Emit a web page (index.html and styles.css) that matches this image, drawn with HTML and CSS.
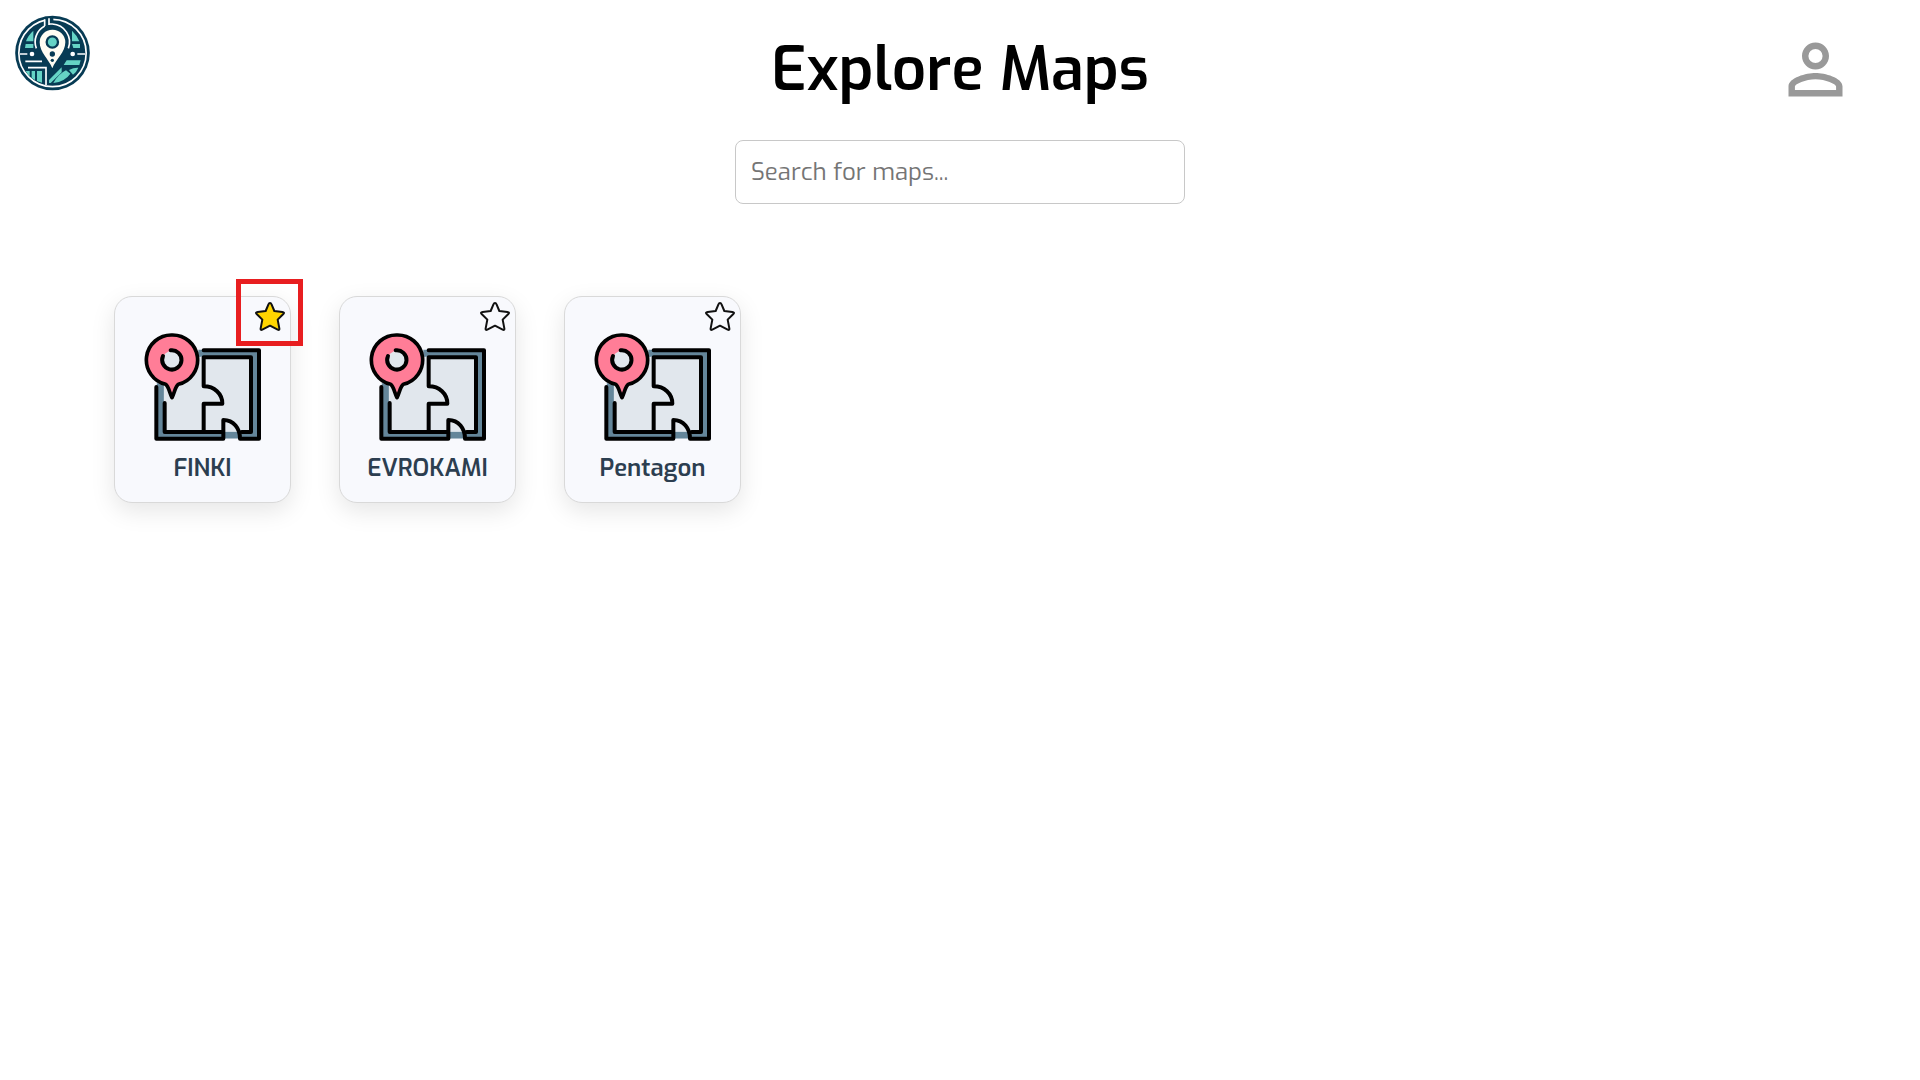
FILE: index.html
```
<!DOCTYPE html>
<html lang="en">
<head>
    <meta charset="UTF-8">
    <meta name="viewport" content="width=device-width, initial-scale=1.0">
    <title>Explore Maps</title>
    <link rel="stylesheet" href="styles.css">
</head>
<body>
    <!-- Shared icons -->
    <svg class="icon-defs" aria-hidden="true">
        <symbol id="floor-plan" viewBox="27 36 354 330">
            <path d="M65 95H372V355H65Z" fill="#e1e7ed"/>
            <path d="M190 100H362V345H76V190" fill="none" stroke="#64869a" stroke-width="21"/>
            <path d="M265 335V300C295 302 312 322 317 335Z" fill="#e1e7ed"/>
            <g fill="none" stroke="#000" stroke-width="12" stroke-linecap="round" stroke-linejoin="round">
                <path d="M206 91H372V356H315C315 325 296 300 265 300V356H64V201"/>
                <path d="M89 249V336H262M206 330V251H262C262 221 238 199 206 199V112H348V336H320"/>
            </g>
            <path d="M111 45A75 75 0 0 0 92 193C101 198 103 217 111 233C119 217 121 198 130 193A75 75 0 0 0 111 45Z" fill="#ff7d97" stroke="#000" stroke-width="11" stroke-linejoin="round"/>
            <circle cx="111" cy="120" r="28" fill="#e1e7ed"/>
            <path d="M107 91A29 29 0 1 1 84 108" fill="none" stroke="#000" stroke-width="12" stroke-linecap="round"/>
        </symbol>
        <symbol id="star" viewBox="0 0 90 87">
            <path d="M45 3Q48 3 50 8L58 27L82 30Q90 31 85 36L68 53L73 79Q74 86 68 83L45 71L22 83Q16 86 17 79L22 53L5 36Q0 31 8 30L32 27L40 8Q42 3 45 3Z" stroke="#111" stroke-width="6" stroke-linejoin="round"/>
        </symbol>
    </svg>

    <header class="header">
        <a class="logo" href="#" aria-label="Home">
            <svg viewBox="45 45 225 228">
                <circle cx="157.5" cy="159" r="112" fill="#073b54"/>
                <circle cx="157.5" cy="159" r="101" fill="none" stroke="#fff" stroke-width="5"/>
                <g fill="#65d3c5">
                    <path d="M100 92V124H78Q84 106 100 92ZM77 132H100V144H75ZM216 92Q231 106 238 124H216ZM216 132H240V144H220Z"/>
                    <path d="M200 181H242L238 195H191ZM77 213H89V229Q82 222 77 213ZM95 213H105V240L95 234ZM111 213H126V248L111 243Z"/>
                    <path d="M147 240L185 202V217L152 249H147ZM160 249Q175 222 198 211L211 221Q196 244 160 249ZM207 210Q222 202 235 203Q230 216 219 224Z"/>
                </g>
                <path d="M134 50H160V76H134Z" fill="#073b54"/>
                <g fill="none" stroke="#fff" stroke-width="5">
                    <path d="M134 58V78M147 55V75M109 145A54 54 0 0 1 134 78M147 72H157A54 54 0 0 1 205 145"/>
                    <path d="M60 162H82M232 162H255M76 184H126M84 203H138V255"/>
                </g>
                <circle cx="96" cy="162" r="7" fill="#fff"/>
                <circle cx="218" cy="162" r="7" fill="#fff"/>
                <path d="M157 89A38 38 0 0 0 119 127C119 157 146 177 157 205C168 177 196 157 196 127A38 38 0 0 0 157 89Z" fill="#fffdf3"/>
                <circle cx="157" cy="126" r="17" fill="#65d3c5" stroke="#073b54" stroke-width="7"/>
                <circle cx="157" cy="162" r="8" fill="#073b54"/>
                <circle cx="157" cy="181" r="5" fill="#073b54"/>
            </svg>
        </a>
        <h1 class="title">Explore Maps</h1>
        <button class="profile" type="button" aria-label="Profile">
            <svg viewBox="0 0 24 24" fill="#999">
                <path d="M12 5.9a2.1 2.1 0 1 1 0 4.2a2.1 2.1 0 0 1 0-4.2m0 9c2.970 0 6.100 1.460 6.100 2.100v1.100H5.900V17c0-.64 3.130-2.100 6.100-2.100M12 4C9.790 4 8 5.790 8 8s1.790 4 4 4 4-1.790 4-4-1.790-4-4-4zm0 9c-2.670 0-8 1.340-8 4v3h16v-3c0-2.660-5.330-4-8-4z"/>
            </svg>
        </button>
    </header>

    <main>
        <form class="search">
            <input class="search-input" type="search" placeholder="Search for maps..." aria-label="Search for maps">
        </form>

        <ul class="map-list">
            <li class="map-card">
                <a class="map-link" href="#">
                    <svg class="map-icon"><use href="#floor-plan"/></svg>
                    <span class="map-name">FINKI</span>
                </a>
                <button class="favourite active" type="button" aria-label="Remove FINKI from favourites">
                    <svg class="star"><use href="#star"/></svg>
                </button>
                <div class="highlight"></div>
            </li>
            <li class="map-card">
                <a class="map-link" href="#">
                    <svg class="map-icon"><use href="#floor-plan"/></svg>
                    <span class="map-name">EVROKAMI</span>
                </a>
                <button class="favourite" type="button" aria-label="Add EVROKAMI to favourites">
                    <svg class="star"><use href="#star"/></svg>
                </button>
            </li>
            <li class="map-card">
                <a class="map-link" href="#">
                    <svg class="map-icon"><use href="#floor-plan"/></svg>
                    <span class="map-name">Pentagon</span>
                </a>
                <button class="favourite" type="button" aria-label="Add Pentagon to favourites">
                    <svg class="star"><use href="#star"/></svg>
                </button>
            </li>
        </ul>
    </main>
</body>
</html>
```
FILE: styles.css
```
* {
    box-sizing: border-box;
}

body {
    margin: 0;
    background-color: #fff;
    font-family: Exo, "Exo 2", Roboto, sans-serif;
}

svg {
    display: block;
}

button {
    padding: 0;
    border: none;
    background: none;
    cursor: pointer;
}

.icon-defs {
    position: absolute;
    width: 0;
    height: 0;
}

/* Header */
.header {
    display: grid;
    grid-template-columns: 1fr auto 1fr;
    align-items: start;
    padding: 15px 64px 0 15px;
}

.logo {
    width: 75px;
}

.title {
    /* evens out the uneven side padding of the header */
    margin: 17px 0 0 49px;
    color: #000;
    font-size: 60px;
    font-weight: 600;
    line-height: 76px;
}

.profile {
    justify-self: end;
    width: 81px;
    margin-top: 14px;
}

/* Search */
.search {
    display: flex;
    justify-content: center;
    padding: 30px 16px 0;
}

.search-input {
    width: 450px;
    max-width: 100%;
    height: 64px;
    padding: 0 15px;
    border: 1px solid #c8c8c8;
    border-radius: 8px;
    font-family: inherit;
    font-size: 24px;
    appearance: none;
}

.search-input::placeholder {
    color: #757575;
}

/* Map cards */
.map-list {
    display: flex;
    flex-wrap: wrap;
    gap: 48px;
    margin: 0;
    padding: 92px 114px 48px;
    list-style: none;
}

.map-card {
    position: relative;
    width: 177px;
    border: 1px solid #d9d9d9;
    border-radius: 18px;
    background-color: #f8f9fd;
    box-shadow: 0 8px 24px rgba(0, 0, 0, 0.1);
}

.map-link {
    display: flex;
    flex-direction: column;
    align-items: center;
    gap: 11px;
    padding: 35px 0 19px;
    color: #2c3e50;
    text-decoration: none;
}

.map-icon {
    width: 118px;
    height: 110px;
}

.map-name {
    font-size: 24px;
    font-weight: 600;
    line-height: 30px;
}

.favourite {
    position: absolute;
    top: 5px;
    right: 5px;
}

.star {
    width: 30px;
    height: 29px;
    fill: transparent;
}

.active .star {
    fill: #ffd500;
}

/* Frame around the favourite button */
.highlight {
    position: absolute;
    top: -18px;
    right: -13px;
    width: 67px;
    height: 67px;
    border: 5px solid #e81e20;
    pointer-events: none;
}

@media (max-width: 700px) {
    .title {
        margin-left: 0;
        font-size: 32px;
    }

    .header {
        padding-right: 16px;
    }

    .map-list {
        justify-content: center;
        padding: 48px 16px;
    }
}
```
